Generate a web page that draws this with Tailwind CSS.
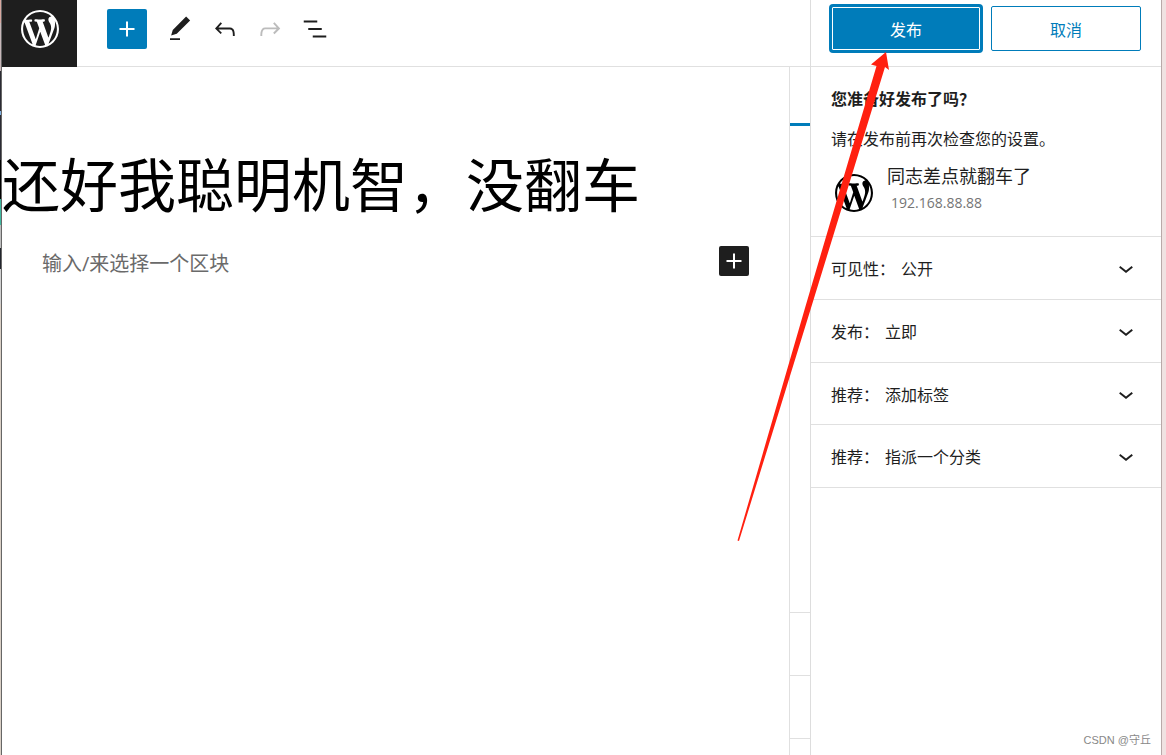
<!DOCTYPE html>
<html lang="zh-CN">
<head>
<meta charset="utf-8">
<meta name="viewport" content="width=device-width, initial-scale=1">
<title>发布文章</title>
<script src="https://cdn.jsdelivr.net/npm/@tailwindcss/browser@4"></script>
</head>
<body class="relative flex min-h-screen overflow-x-hidden bg-white font-['Open_Sans','Noto_Sans_CJK_SC',sans-serif] text-base text-[#1e1e1e]">
<svg class="hidden" aria-hidden="true">
  <symbol id="wp" viewBox="0 0 20 20"><path d="M20 10c0-5.51-4.49-10-10-10C4.48 0 0 4.49 0 10c0 5.52 4.48 10 10 10 5.51 0 10-4.48 10-10zM7.78 15.37L4.37 6.22c.55-.02 1.17-.08 1.17-.08.5-.06.44-1.13-.06-1.11 0 0-1.45.11-2.37.11-.18 0-.37 0-.58-.01C4.12 2.69 6.87 1.11 10 1.11c2.33 0 4.45.87 6.05 2.34-.68-.11-1.65.39-1.65 1.58 0 .74.45 1.36.9 2.1.35.61.55 1.36.55 2.46 0 1.49-1.4 5-1.4 5l-3.03-8.37c.54-.02.82-.17.82-.17.5-.05.44-1.25-.06-1.22 0 0-1.44.12-2.38.12-.87 0-2.33-.12-2.33-.12-.5-.03-.56 1.2-.06 1.22l.92.08 1.26 3.41zM17.41 10c.24-.64.74-1.87.43-4.25.7 1.29 1.05 2.71 1.05 4.25 0 3.29-1.73 6.24-4.4 7.78.97-2.59 1.94-5.2 2.92-7.78zM6.1 18.09C3.12 16.65 1.11 13.53 1.11 10c0-1.3.23-2.48.72-3.59C3.25 10.3 4.67 14.2 6.1 18.09zm4.03-6.63l2.58 6.98c-.86.29-1.76.45-2.71.45-.79 0-1.57-.11-2.29-.33.81-2.38 1.62-4.74 2.42-7.1z"/></symbol>
  <symbol id="plus" viewBox="0 0 24 24"><path d="M18 11.2h-5.2V6h-1.6v5.2H6v1.6h5.2V18h1.6v-5.2H18z"/></symbol>
  <symbol id="chevron" viewBox="0 0 24 24"><path d="M17.5 11.6L12 16l-5.5-4.4.9-1.2L12 14l4.5-3.6 1 1.2z"/></symbol>
</svg>

<!-- strip of the window behind -->
<div class="flex w-[2px] shrink-0" aria-hidden="true">
  <div class="flex w-px flex-col">
    <i class="h-[23px] bg-[#d8a8a0]"></i><i class="h-[48px] bg-[#c8b8ba]"></i><i class="h-[40px] bg-[#2b2b33]"></i><i class="h-[4px] bg-[#7fb0e0]"></i><i class="h-[45px] bg-[#2b2b33]"></i><i class="h-[39px] bg-black"></i><i class="h-[26px] bg-[#40b8a0]"></i><i class="h-[23px] bg-[#bdbdbd]"></i><i class="h-[21px] bg-[#22252c]"></i><i class="h-[35px] bg-[#d0d0d0]"></i><i class="flex-1 bg-[#d9cfc5]"></i>
  </div>
  <div class="w-px bg-[#666]"></div>
</div>

<div class="flex min-w-0 flex-1 flex-col">
  <header class="flex h-[67px] shrink-0 items-start border-b border-[#e0e0e0]">
    <a href="#" aria-label="查看文章" class="flex h-[67px] w-[75px] items-start justify-center bg-[#1e1e1e] pt-[10px] text-white"><svg class="size-[38px] fill-current"><use href="#wp"/></svg></a>
    <div class="flex items-center gap-[5px] pt-[9px] pl-[30px]">
      <button aria-label="添加区块" class="flex size-10 items-center justify-center rounded-[2px] bg-[#007cba] text-white"><svg class="size-[30px] fill-current"><use href="#plus"/></svg></button>
      <button aria-label="工具" class="ml-[8px] flex size-10 items-center justify-center"><svg class="size-[30px] fill-current" viewBox="0 0 24 24"><path d="M20.1 5.1L16.9 2 6.2 12.7l-1.3 4.4 4.5-1.3L20.1 5.100zM4 20.800h8v-1.500H4v1.500z"/></svg></button>
      <button aria-label="撤销" class="flex size-10 items-center justify-center"><svg class="size-[30px] fill-current" viewBox="0 0 24 24"><path d="M18.3 11.700c-.6-.6-1.400-.9-2.300-.9H6.700l2.900-3.300-1.100-1-4.500 5L8.500 16l1-1-2.700-2.700H16c.5 0 .9.2 1.300.5 1 1 1 3.400 1 4.500v.3h1.500v-.2c0-1.500 0-4.300-1.500-5.700z"/></svg></button>
      <button aria-label="重做" class="flex size-10 items-center justify-center text-[#bcbcbc]" disabled><svg class="size-[30px] fill-current" viewBox="0 0 24 24"><path d="M15.600 6.500l-1.100 1 2.900 3.300H8c-.9 0-1.700.3-2.300.9-1.400 1.500-1.400 4.200-1.400 5.600v.2h1.500v-.3c0-1.100 0-3.500 1-4.500.3-.3.7-.5 1.300-.5h9.200L14.500 15l1.100 1.100 4.600-4.600-4.600-5z"/></svg></button>
      <button aria-label="列表视图" class="flex size-10 items-center justify-center"><svg class="size-[30px] fill-current" viewBox="0 0 24 24"><path d="M13.800 5.200H3v1.500h10.800V5.200zm-3.600 12v1.500H21v-1.500H10.200zm7.200-6H6.600v1.500h10.800v-1.500z"/></svg></button>
    </div>
  </header>
  <div class="flex flex-1">
    <main class="min-w-0 flex-1">
      <h1 class="pt-[76px] text-[58px] leading-[84px] whitespace-nowrap text-black">还好我聪明机智，没翻车</h1>
      <div class="flex items-start justify-between pt-[19px] pr-10 pl-10">
        <p class="text-xl leading-[36px] text-[#6a6a6a]">输入/来选择一个区块</p>
        <button aria-label="添加区块" class="flex size-[30px] items-center justify-center rounded-[2px] bg-[#1e1e1e] text-white"><svg class="size-[30px] fill-current"><use href="#plus"/></svg></button>
      </div>
    </main>
    <!-- settings column, mostly covered by the publish panel -->
    <div class="flex w-[21px] shrink-0 flex-col border-l border-[#e0e0e0]" aria-hidden="true">
      <div class="h-[59px] border-b-[3px] border-[#007cba]"></div>
      <div class="h-[487px] border-b border-[#e0e0e0]"></div>
      <div class="h-[63px] border-b border-[#e0e0e0]"></div>
      <div class="h-[63px] border-b border-[#e0e0e0]"></div>
    </div>
  </div>
</div>

<aside class="flex w-[352px] shrink-0 flex-col border-x border-l-[#ddd] border-r-[#b9a9a9] bg-white">
  <div class="flex h-[67px] shrink-0 items-start gap-[10px] border-b border-[#e0e0e0] pt-[6px] pr-5 pl-5">
    <button class="h-[45px] flex-1 rounded-[2px] border border-[#007cba] bg-[#007cba] pt-[2px] text-white shadow-[inset_0_0_0_1px_#fff,0_0_0_2px_#007cba]">发布</button>
    <button class="h-[45px] flex-1 rounded-[2px] border border-[#007cba] pt-[2px] text-[#007cba]">取消</button>
  </div>
  <section class="border-b border-[#e0e0e0] px-5 pt-5 pb-5">
    <h2 class="leading-6 font-bold">您准备好发布了吗？</h2>
    <p class="mt-4 leading-6">请在发布前再次检查您的设置。</p>
    <div class="mt-3 flex items-center gap-[14px]">
      <svg class="mt-[6px] ml-1 size-[38px] shrink-0 fill-black"><use href="#wp"/></svg>
      <div>
        <div class="text-lg leading-[26px]">同志差点就翻车了</div>
        <div class="pl-1 text-sm leading-[27px] text-[#757575]">192.168.88.88</div>
      </div>
    </div>
  </section>
  <button class="flex h-[63px] items-center border-b border-[#e0e0e0] pr-5 pl-5 text-left"><span class="pt-[2px]">可见性：</span><span class="ml-[6px] flex-1 pt-[2px]">公开</span><svg class="size-[30px] fill-current"><use href="#chevron"/></svg></button>
  <button class="flex h-[63px] items-center border-b border-[#e0e0e0] pr-5 pl-5 text-left"><span class="pt-[2px]">发布：</span><span class="ml-[6px] flex-1 pt-[2px]">立即</span><svg class="size-[30px] fill-current"><use href="#chevron"/></svg></button>
  <button class="flex h-[62px] items-center border-b border-[#e0e0e0] pr-5 pl-5 text-left"><span class="pt-[2px]">推荐：</span><span class="ml-[6px] flex-1 pt-[2px]">添加标签</span><svg class="size-[30px] fill-current"><use href="#chevron"/></svg></button>
  <button class="flex h-[63px] items-center border-b border-[#e0e0e0] pr-5 pl-5 text-left"><span class="pt-[2px]">推荐：</span><span class="ml-[6px] flex-1 pt-[2px]">指派一个分类</span><svg class="size-[30px] fill-current"><use href="#chevron"/></svg></button>
  <p class="mt-auto pr-[10px] pb-[7px] text-right font-['Liberation_Sans','Noto_Sans_CJK_SC',sans-serif] text-[11px] leading-4 text-[#888]">CSDN @守丘</p>
</aside>
<div class="w-1 shrink-0 bg-[#f0e2e2]" aria-hidden="true"></div>

<!-- arrow pointing at the publish button -->
<svg class="pointer-events-none absolute top-[52px] right-[276px] h-[489px] w-[153px] fill-[#ff2010]" viewBox="0 0 153 489" aria-hidden="true"><path d="M149 0L134 12.500L139.500 14L91 178L68 256L0.500 488.500L2 489L74 256L98 178L148 15L152 18Z"/></svg>
</body>
</html>
